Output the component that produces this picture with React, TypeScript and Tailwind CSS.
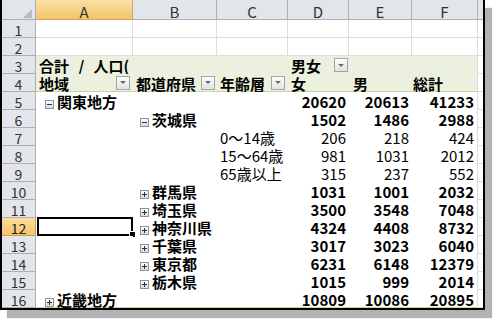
import React from "react";

const GRID = "grid grid-cols-[34px_97px_84px_71px_61px_63px_66px_5px]";

function Toggle({ plus }: { plus?: boolean }) {
  return (
    <svg width="9" height="9" viewBox="0 0 9 9" className="shrink-0 mt-[8px]">
      <defs>
        <linearGradient id="tgl" x1="0" y1="0" x2="0" y2="1">
          <stop offset="0" stopColor="#ffffff" />
          <stop offset="1" stopColor="#d3d9e1" />
        </linearGradient>
      </defs>
      <rect x="0.5" y="0.5" width="8" height="8" fill="url(#tgl)" stroke="#8d939b" />
      <rect x="2" y="4" width="5" height="1" fill="#27303b" />
      {plus && <rect x="4" y="2" width="1" height="5" fill="#27303b" />}
    </svg>
  );
}

function DD() {
  return (
    <div className="w-[14px] h-[14px] shrink-0 border border-[#a4a4a4] bg-gradient-to-b from-white to-[#e2e2e2] flex items-center justify-center">
      <svg width="6" height="3" viewBox="0 0 6 3">
        <path d="M0 0H6L3 3Z" fill="#6a6a6a" />
      </svg>
    </div>
  );
}

function RowHead({ n, sel }: { n: number; sel?: boolean }) {
  return (
    <div
      className={
        sel
          ? "h-[18px] border-r border-b border-[#c99f55] bg-gradient-to-b from-[#fbdd9f] to-[#f4c465] text-center text-[14px] leading-[13px] pt-[4px] text-[#222]"
          : "h-[18px] border-r border-b border-[#aab0b7] bg-[#e2e5e9] text-center text-[14px] leading-[13px] pt-[4px] text-[#333]"
      }
    >
      {n}
    </div>
  );
}

function GridCell() {
  return <div className="h-[18px] border-r border-b border-[#dadcdd] bg-white" />;
}

function GCell() {
  return <div className="h-[18px] border-b border-[#dadcdd] bg-white" />;
}

type PRow = {
  n: number;
  a?: React.ReactNode;
  b?: React.ReactNode;
  c?: React.ReactNode;
  d: string;
  e: string;
  f: string;
  bold: boolean;
  line?: boolean;
  sel?: boolean;
};

function Item({ plus, label }: { plus?: boolean; label: string }) {
  return (
    <div className="flex h-[18px]">
      <Toggle plus={plus} />
      <span className="ml-[3px] font-bold text-[15px] leading-[16px] pt-[2px] whitespace-nowrap">{label}</span>
    </div>
  );
}

const rows: PRow[] = [
  { n: 5, a: <div className="pl-[9px]"><Item label="関東地方" /></div>, d: "20620", e: "20613", f: "41233", bold: true },
  { n: 6, b: <div className="pl-[7px]"><Item label="茨城県" /></div>, d: "1502", e: "1486", f: "2988", bold: true },
  { n: 7, c: "0〜14歳", d: "206", e: "218", f: "424", bold: false },
  { n: 8, c: "15〜64歳", d: "981", e: "1031", f: "2012", bold: false },
  { n: 9, c: "65歳以上", d: "315", e: "237", f: "552", bold: false },
  { n: 10, b: <div className="pl-[7px]"><Item plus label="群馬県" /></div>, d: "1031", e: "1001", f: "2032", bold: true },
  { n: 11, b: <div className="pl-[7px]"><Item plus label="埼玉県" /></div>, d: "3500", e: "3548", f: "7048", bold: true },
  { n: 12, sel: true, b: <div className="pl-[7px]"><Item plus label="神奈川県" /></div>, d: "4324", e: "4408", f: "8732", bold: true },
  { n: 13, b: <div className="pl-[7px]"><Item plus label="千葉県" /></div>, d: "3017", e: "3023", f: "6040", bold: true },
  { n: 14, b: <div className="pl-[7px]"><Item plus label="東京都" /></div>, d: "6231", e: "6148", f: "12379", bold: true },
  { n: 15, b: <div className="pl-[7px]"><Item plus label="栃木県" /></div>, d: "1015", e: "999", f: "2014", bold: true },
  { n: 16, a: <div className="pl-[9px]"><Item plus label="近畿地方" /></div>, d: "10809", e: "10086", f: "20895", bold: true, line: true },
];

function Num({ v, bold, line, last }: { v: string; bold: boolean; line?: boolean; last?: boolean }) {
  let cls = "h-[18px] bg-white text-right pr-[3px] text-[15px] leading-[16px] pt-[2px] whitespace-nowrap";
  if (bold) cls += " font-bold";
  if (line) cls += " border-b border-b-[#c4d79b]";
  if (last) cls += " border-r border-r-[#dadcdd]";
  return <div className={cls}>{v}</div>;
}

function PivotRow({ r }: { r: PRow }) {
  const base = r.line ? "h-[18px] bg-white border-b border-b-[#c4d79b]" : "h-[18px] bg-white";
  return (
    <div className={GRID}>
      <RowHead n={r.n} sel={r.sel} />
      <div className={base + " relative"}>
        {r.a}
        {r.sel && (
          <div className="absolute left-[1px] top-[-1px] w-[96px] h-[19px] border-2 border-black">
            <div className="absolute left-[90px] top-[12px] w-[7px] h-[7px] bg-black border border-white" />
          </div>
        )}
      </div>
      <div className={base}>{r.b}</div>
      <div className={base}>
        {r.c && (
          <div className="pl-[3px] text-[15px] leading-[16px] pt-[2px] whitespace-nowrap">{r.c}</div>
        )}
      </div>
      <Num v={r.d} bold={r.bold} line={r.line} />
      <Num v={r.e} bold={r.bold} line={r.line} />
      <Num v={r.f} bold={r.bold} line={r.line} last />
      <GCell />
    </div>
  );
}

export default function App() {
  const colHead =
    "h-[20px] border-r border-b border-[#aab0b7] bg-[#e2e5e9] text-center text-[15px] leading-[15px] pt-[4px] text-[#333]";
  const green = "h-[18px] bg-[#ebf1de]";
  const greenLine = "h-[18px] bg-[#ebf1de] border-b border-b-[#c4d79b]";
  return (
    <div className="w-[493px] h-[319px] bg-white font-['Noto_Sans_CJK_JP','Noto_Sans',sans-serif] text-black">
      <div className="w-[485px] h-[310px] border-l-2 border-r-2 border-b-2 border-black bg-white shadow-[7px_8px_1px_#b2b2b2] overflow-hidden">
        {/* column headers */}
        <div className={GRID}>
          <div className="relative h-[20px] border-r border-b border-[#aab0b7] bg-[#e2e5e9]">
            <svg className="absolute right-[3px] bottom-[1px]" width="9" height="9" viewBox="0 0 9 9">
              <path d="M9 0V9H0Z" fill="#b6bcc3" />
            </svg>
          </div>
          <div className="h-[20px] border-r border-b border-[#cfa860] bg-gradient-to-b from-[#fbdfa6] to-[#f3c566] text-center text-[15px] leading-[15px] pt-[4px] text-[#333]">
            A
          </div>
          <div className={colHead}>B</div>
          <div className={colHead}>C</div>
          <div className={colHead}>D</div>
          <div className={colHead}>E</div>
          <div className={colHead}>F</div>
          <div className="h-[20px] border-b border-[#aab0b7] bg-[#e2e5e9]" />
        </div>

        {/* rows 1-2 */}
        {[1, 2].map((n) => (
          <div key={n} className={GRID}>
            <RowHead n={n} />
            <GridCell />
            <GridCell />
            <GridCell />
            <GridCell />
            <GridCell />
            <GridCell />
            <GCell />
          </div>
        ))}

        {/* row 3 */}
        <div className={GRID}>
          <RowHead n={3} />
          <div className={green + " overflow-hidden"}>
            <div className="pl-[3px] font-bold text-[15px] leading-[16px] pt-[2px] whitespace-pre">
              合計 <span className="mx-[6px]">/</span> 人口(
            </div>
          </div>
          <div className={green} />
          <div className={green} />
          <div className={green + " flex items-center justify-between pr-[1px]"}>
            <span className="pl-[3px] font-bold text-[15px] leading-[16px] pt-[2px] whitespace-nowrap">男女</span>
            <DD />
          </div>
          <div className={green} />
          <div className={green + " border-r border-r-[#dadcdd]"} />
          <GCell />
        </div>

        {/* row 4 */}
        <div className={GRID}>
          <RowHead n={4} />
          <div className={greenLine + " flex items-center justify-between pr-[3px]"}>
            <span className="pl-[3px] font-bold text-[15px] leading-[16px] pt-[2px] whitespace-nowrap">地域</span>
            <DD />
          </div>
          <div className={greenLine + " flex items-center justify-between pr-[2px]"}>
            <span className="pl-[3px] font-bold text-[15px] leading-[16px] pt-[2px] whitespace-nowrap">都道府県</span>
            <DD />
          </div>
          <div className={greenLine + " flex items-center justify-between pr-[3px]"}>
            <span className="pl-[3px] font-bold text-[15px] leading-[16px] pt-[2px] whitespace-nowrap">年齢層</span>
            <DD />
          </div>
          <div className={greenLine}>
            <div className="pl-[3px] font-bold text-[15px] leading-[16px] pt-[2px]">女</div>
          </div>
          <div className={greenLine}>
            <div className="pl-[4px] font-bold text-[15px] leading-[16px] pt-[2px]">男</div>
          </div>
          <div className={greenLine + " border-r border-r-[#dadcdd]"}>
            <div className="pl-[1px] font-bold text-[15px] leading-[16px] pt-[2px]">総計</div>
          </div>
          <GCell />
        </div>

        {rows.map((r) => (
          <PivotRow key={r.n} r={r} />
        ))}
      </div>
    </div>
  );
}
